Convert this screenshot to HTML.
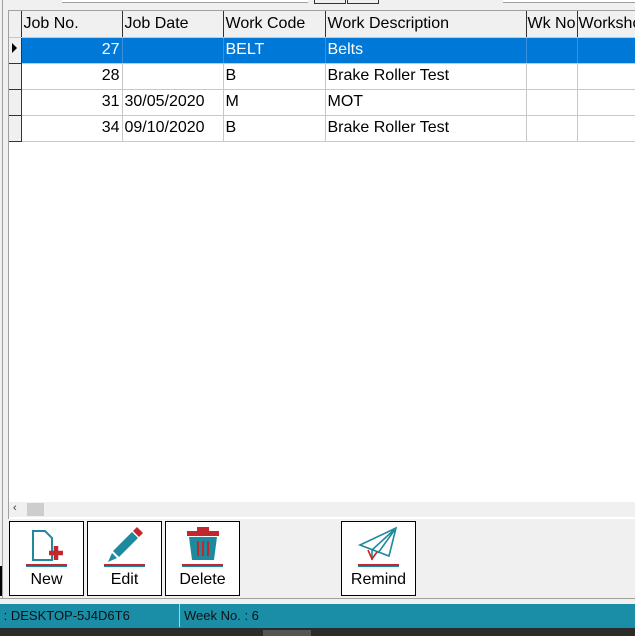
<!DOCTYPE html>
<html><head><style>
body{margin:0;width:635px;height:636px;overflow:hidden;background:#f0f0f0;font-family:"Liberation Sans",sans-serif;position:relative}
.a{position:absolute}
.grid{left:8px;top:10px;width:627px;height:508px;background:#fff;border-left:1px solid #a0a0a0;border-top:1px solid #a0a0a0}
table{border-collapse:collapse;table-layout:fixed;position:absolute;left:9px;top:11px;font-size:16px;width:638px}
td{box-sizing:border-box;height:26px;border-right:1px solid #c8c8c8;border-bottom:1px solid #c8c8c8;padding:0 2px;white-space:nowrap;overflow:hidden}
tr.h td{background:#f0f0f0;border-right:1px solid #333;border-bottom:1px solid #c8c8c8}
td.rh{background:#f0f0f0;border-right:1px solid #333;border-bottom:1px solid #333;padding:0}
tr.s td{background:#0078d7;color:#fff;border-right-color:#3a8fdf}
.r{text-align:right}
.btn{top:521px;width:73px;height:73px;border:1px solid #000;background:#fff;font-size:16px;text-align:center}
.btn span{position:absolute;left:0;right:0;top:49px}
.btn .ln{position:absolute;left:16px;width:41px;top:42px;height:2px;background:#c1272d;border-bottom:1px solid #1f8a9e}
</style></head><body>
<div class="a" style="left:62px;top:0;width:246px;height:2px;border-bottom:1px solid #a0a0a0;background:#fff"></div>
<div class="a" style="left:314px;top:0;width:30px;height:3px;border:1px solid #333;border-top:0"></div>
<div class="a" style="left:347px;top:0;width:30px;height:3px;border:1px solid #333;border-top:0"></div>
<div class="a" style="left:503px;top:0;width:132px;height:2px;border-bottom:1px solid #a0a0a0;background:#fff"></div>
<div class="a" style="left:2px;top:0;width:1px;height:598px;background:#a0a0a0"></div>
<div class="a grid"></div>
<table>
<colgroup><col style="width:12px"><col style="width:101px"><col style="width:101px"><col style="width:102px"><col style="width:201px"><col style="width:51px"><col style="width:70px"></colgroup>
<tr class="h"><td class="rh" style="border-bottom:1px solid #c8c8c8"></td><td>Job No.</td><td>Job Date</td><td>Work Code</td><td>Work Description</td><td style="padding:0 1px">Wk No</td><td style="border-right:0;padding:0 1px">Workshop</td></tr>
<tr class="s"><td class="rh" style="background:#f0f0f0;border-right-color:#333"><svg width="11" height="12"><path d="M3 1 L8 6 L3 11Z" fill="#000"/></svg></td><td class="r">27</td><td></td><td>BELT</td><td>Belts</td><td></td><td style="border-right:0"></td></tr>
<tr><td class="rh"></td><td class="r">28</td><td></td><td>B</td><td>Brake Roller Test</td><td></td><td style="border-right:0"></td></tr>
<tr><td class="rh"></td><td class="r">31</td><td>30/05/2020</td><td>M</td><td>MOT</td><td></td><td style="border-right:0"></td></tr>
<tr><td class="rh"></td><td class="r">34</td><td>09/10/2020</td><td>B</td><td>Brake Roller Test</td><td></td><td style="border-right:0"></td></tr>
</table>
<div class="a" style="left:9px;top:502px;width:626px;height:15px;background:#f0f0f0"></div>
<div class="a" style="left:13px;top:502px;font-size:11px;color:#333">&lsaquo;</div>
<div class="a" style="left:27px;top:503px;width:17px;height:13px;background:#cdcdcd"></div>
<div class="a" style="left:0;top:566px;width:2px;height:30px;background:#000"></div>
<div class="a btn" style="left:9px"><svg class="a" style="left:21px;top:7px" width="36" height="36"><path d="M2 2 H14 L21 9 V31 H2Z" fill="none" stroke="#1f8a9e" stroke-width="2"/><path d="M18 24 H32 M25 17 V31" stroke="#c1272d" stroke-width="4.5"/></svg><div class="ln"></div><span>New</span></div>
<div class="a btn" style="left:87px"><svg class="a" style="left:17px;top:4px" width="42" height="38"><path d="M8 25 L27 6 L33 12 L14 31Z" fill="#1f8a9e"/><path d="M7 27 L12 32 L3 36Z" fill="#1f8a9e"/><path d="M28 5 L32 1 L38 7 L34 11Z" fill="#c1272d"/></svg><div class="ln"></div><span>Edit</span></div>
<div class="a btn" style="left:165px"><svg class="a" style="left:19px;top:4px" width="36" height="38"><rect x="12" y="1" width="12" height="4" fill="#c1272d"/><rect x="2" y="5" width="32" height="5" fill="#c1272d"/><path d="M4 11 H32 L29 34 H7Z" fill="#1f8a9e"/><path d="M13 15 V30 M18 15 V30 M23 15 V30" stroke="#c1272d" stroke-width="2"/></svg><div class="ln"></div><span>Delete</span></div>
<div class="a btn" style="left:341px"><svg class="a" style="left:16px;top:4px" width="42" height="38"><path d="M2 19 L38 2 L31 30Z M38 2 L14 24 L14 34 M38 2 L20 27" fill="none" stroke="#1f8a9e" stroke-width="1.6"/><path d="M10 24 L14 33 L19 26" fill="none" stroke="#c1272d" stroke-width="1.6"/></svg><div class="ln"></div><span>Remind</span></div>
<div class="a" style="left:0;top:598px;width:635px;height:1px;background:#a0a0a0"></div>
<div class="a" style="left:0;top:604px;width:635px;height:24px;background:#1a8ea6"></div>
<div class="a" style="left:0;top:604px;width:179px;height:23px;border-right:1px solid #9fd3de;font-size:13px;line-height:24px;color:#111">&nbsp;: DESKTOP-5J4D6T6</div>
<div class="a" style="left:184px;top:604px;font-size:13px;line-height:24px;color:#111">Week No. : 6</div>
<div class="a" style="left:0;top:628px;width:635px;height:8px;background:#2b2b2b"></div>
<div class="a" style="left:263px;top:630px;width:48px;height:6px;background:#555"></div>
</body></html>
